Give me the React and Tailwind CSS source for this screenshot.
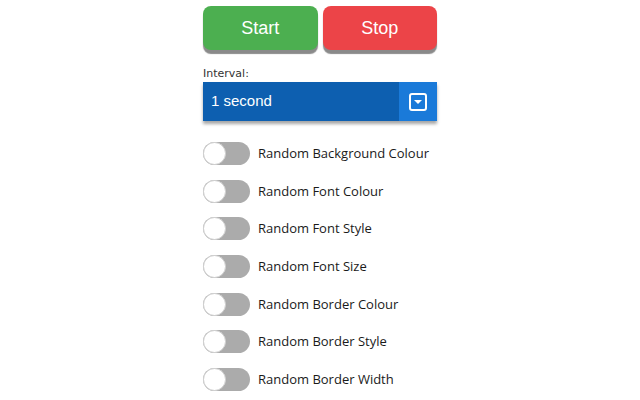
import React, { useState } from 'react';

const options = [
  'Random Background Colour',
  'Random Font Colour',
  'Random Font Style',
  'Random Font Size',
  'Random Border Colour',
  'Random Border Style',
  'Random Border Width'
];

const Toggle = ({ on, onClick }) => (
  <button
    onClick={onClick}
    className={`relative w-[47px] h-[23px] rounded-full shrink-0 ${on ? 'bg-[#4caf50]' : 'bg-[#ababab]'}`}
  >
    <span
      className={`absolute top-0 w-[23px] h-[23px] rounded-full bg-white border border-[#d0d0d0] ${on ? 'left-[24px]' : 'left-0'}`}
    />
  </button>
);

const App = () => {
  const [checked, setChecked] = useState(options.map(() => false));

  const flip = (i) => setChecked(checked.map((c, j) => (j === i ? !c : c)));

  return (
    <div className="w-[640px] h-[400px] bg-white overflow-hidden font-['Liberation_Sans',Arial,sans-serif]">
      <div className="w-[234px] mx-auto pt-[6px]">
        <div className="flex gap-[5px]">
          <button className="flex-1 h-[44px] rounded-[8px] bg-[#4caf50] text-white text-[18px] shadow-[0_4px_1px_#8a8a8a]">
            Start
          </button>
          <button className="flex-1 h-[44px] rounded-[8px] bg-[#ec4448] text-white text-[18px] shadow-[0_4px_1px_#8a8a8a]">
            Stop
          </button>
        </div>

        <div className="mt-[17px] text-[11px] leading-[13px] text-[#333] font-['DejaVu_Sans',sans-serif]">Interval:</div>

        <div className="mt-[2px] flex h-[39px] shadow-[0_3px_3px_rgba(0,0,0,0.35)]">
          <div className="flex-1 bg-[#0d5fb0] text-white text-[15px] flex items-center pl-[8px]">1 second</div>
          <div className="w-[38px] bg-[#1a7ad9] flex items-center justify-center">
            <svg width="18" height="18" viewBox="0 0 18 18">
              <rect x="1" y="1" width="16" height="16" rx="2" fill="none" stroke="white" strokeWidth="2" />
              <path d="M5 7 L13 7 L9 11 Z" fill="white" />
            </svg>
          </div>
        </div>

        <div className="mt-[21px] flex flex-col">
          {options.map((label, i) => (
            <div key={label} className="h-[37.7px] flex items-start gap-[8px]">
              <Toggle on={checked[i]} onClick={() => flip(i)} />
              <span className="text-[13px] leading-[22px] text-[#1a1a1a] font-['Open_Sans',sans-serif]">{label}</span>
            </div>
          ))}
        </div>
      </div>
    </div>
  );
};

export default App;
